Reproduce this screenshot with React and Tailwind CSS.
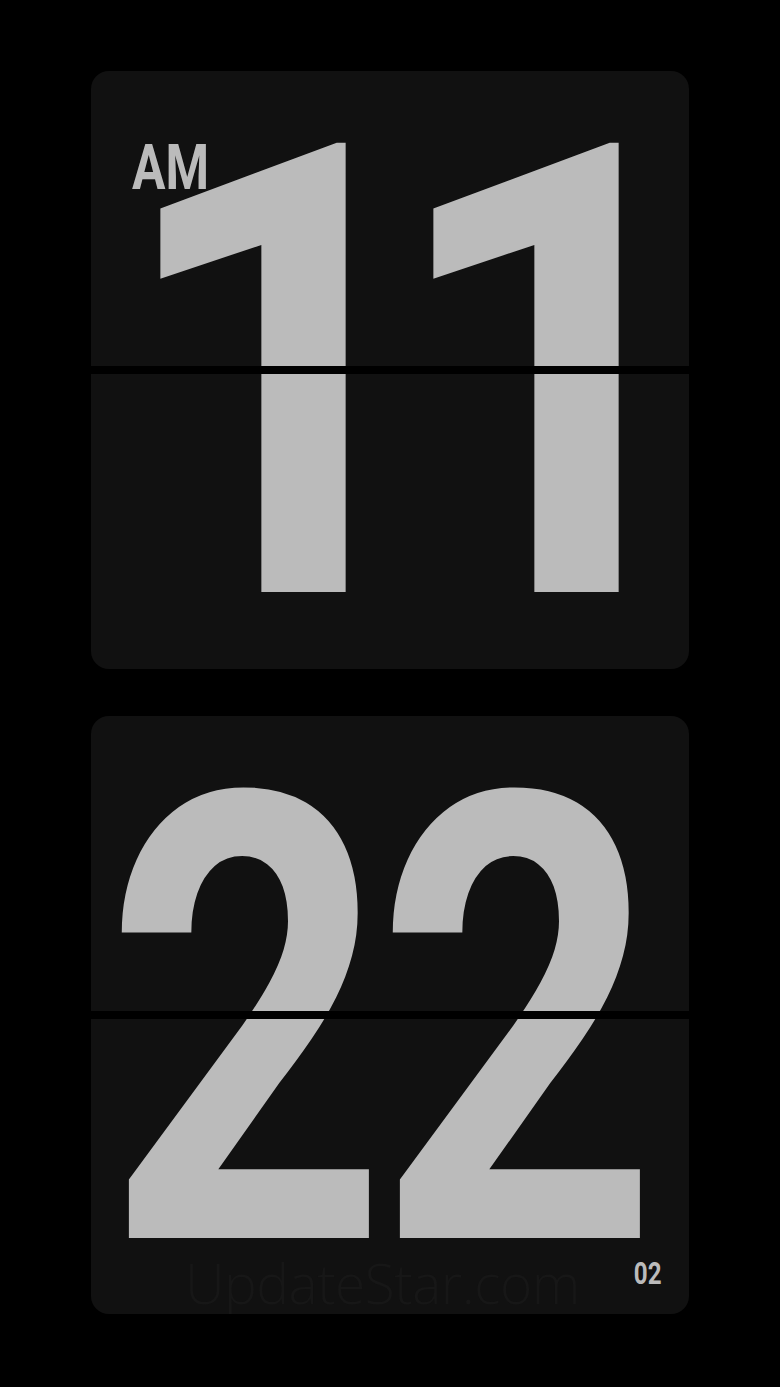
import * as React from 'react';

const digitFont = { fontFamily: 'Roboto, "Liberation Sans", Arial, sans-serif' };

// each glyph sits in a fixed-width slot and is squeezed to a condensed look
function Digit({ char, slot, squeeze }) {
  return (
    <div className={`flex justify-center ${slot}`}>
      <span className={`inline-block ${squeeze}`}>{char}</span>
    </div>
  );
}

function FlipCard({ children, row }) {
  return (
    <div className="relative w-[598px] h-[598px] rounded-[18px] bg-[#111111] overflow-hidden flex items-center justify-center">
      {row}
      {/* split line */}
      <div className="absolute left-0 right-0 top-[295px] h-[8px] bg-black" />
      {children}
    </div>
  );
}

export default function App() {
  const hours = (
    <div
      className="flex gap-[87px] leading-none font-bold text-[631px] text-[#bbbbbb] mt-[2px] ml-[2px] translate-y-[5px]"
      style={digitFont}
    >
      <Digit char="1" slot="w-[186px]" squeeze="scale-x-[0.95] translate-x-[29px]" />
      <Digit char="1" slot="w-[186px]" squeeze="scale-x-[0.95] translate-x-[29px]" />
    </div>
  );
  const minutes = (
    <div
      className="flex gap-[23px] leading-none font-bold text-[625px] text-[#bbbbbb] mt-[2px] mr-[18px] translate-y-[8px]"
      style={digitFont}
    >
      <Digit char="2" slot="w-[250px]" squeeze="scale-x-[0.79]" />
      <Digit char="2" slot="w-[246px]" squeeze="scale-x-[0.79]" />
    </div>
  );

  return (
    <div className="w-[780px] h-[1387px] bg-black flex flex-col items-start pl-[91px] pt-[71px] gap-[47px]">
      <FlipCard row={hours}>
        <div
          className="absolute left-[41px] top-[65px] text-[63px] font-bold leading-none text-[#bbbbbb] scale-x-[0.79] origin-left"
          style={digitFont}
        >
          AM
        </div>
      </FlipCard>
      <FlipCard row={minutes}>
        <div className="absolute left-[94px] bottom-[4px] text-[55px] tracking-[-0.5px] leading-none text-[#171717] font-['Open_Sans',sans-serif] font-light">
          UpdateStar.com
        </div>
        <div
          className="absolute right-[27px] bottom-[25px] text-[31px] font-bold leading-none text-[#bbbbbb] scale-x-[0.78] origin-right"
          style={digitFont}
        >
          02
        </div>
      </FlipCard>
    </div>
  );
}
